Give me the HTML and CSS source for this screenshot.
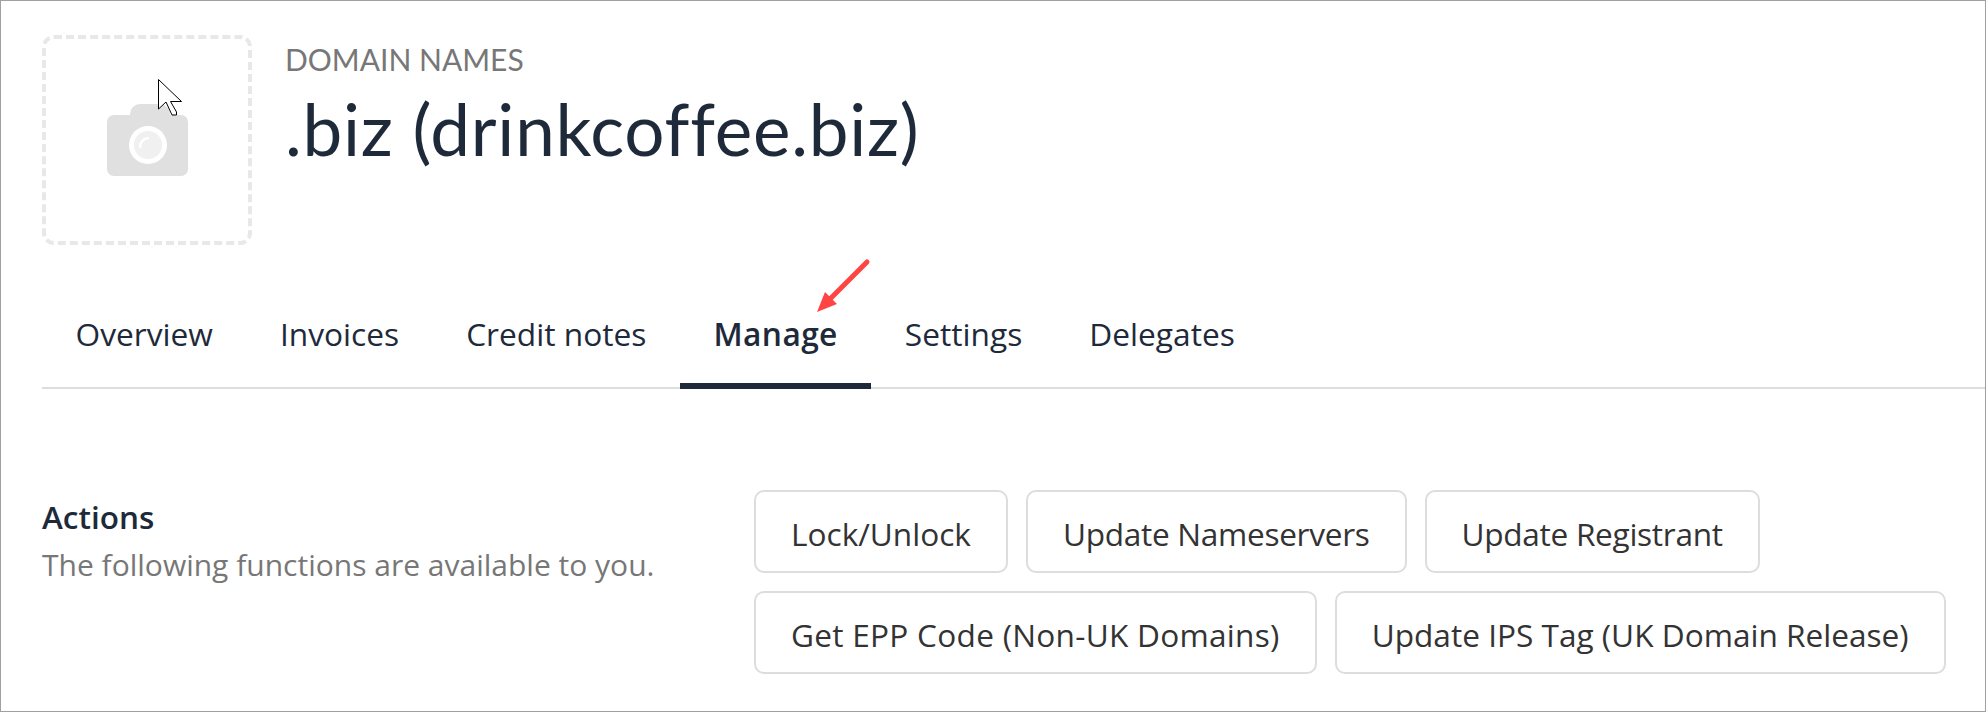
FILE: index.html
```html
<!DOCTYPE html>
<html lang="en">

<head>
    <meta charset="UTF-8" />
    <meta name="viewport" content="width=device-width, initial-scale=1.0" />
    <title>.biz (drinkcoffee.biz)</title>
    <link rel="stylesheet" href="styles.css">
</head>

<body>
    <div class="frame">
        <header class="header">
            <div class="logo-box">
                <svg class="camera" width="82" height="72" viewBox="0 0 82 72">
                    <path fill="#e0e0e0" d="M7 11h16v-1a10 10 0 0 1 10-10h20a10 10 0 0 1 10 10v1h11a7 7 0 0 1 7 7v47a7 7 0 0 1-7 7H7a7 7 0 0 1-7-7V18a7 7 0 0 1 7-7z" />
                    <circle cx="41" cy="41" r="19" fill="#fff" />
                    <circle cx="41" cy="41" r="14" fill="#f0f0f0" />
                    <path fill="none" stroke="#fff" stroke-width="2.5" stroke-linecap="round" d="M33 43a9 9 0 0 1 8-9" />
                </svg>
            </div>
            <div class="title-block">
                <div class="eyebrow">DOMAIN NAMES</div>
                <h1>.biz (drinkcoffee.biz)</h1>
            </div>
        </header>

        <nav class="tabs">
            <a class="tab">Overview</a>
            <a class="tab">Invoices</a>
            <a class="tab">Credit notes</a>
            <a class="tab active">Manage</a>
            <a class="tab">Settings</a>
            <a class="tab">Delegates</a>
        </nav>

        <section class="actions">
            <div class="actions-info">
                <h2>Actions</h2>
                <p>The following functions are available to you.</p>
            </div>
            <div class="actions-buttons">
                <button type="button">Lock/Unlock</button>
                <button type="button" class="tight">Update Nameservers</button>
                <button type="button" class="tight">Update Registrant</button>
                <button type="button" class="loose">Get EPP Code (Non-UK Domains)</button>
                <button type="button">Update IPS Tag (UK Domain Release)</button>
            </div>
        </section>

        <svg class="pointer" width="26" height="40" viewBox="0 0 26 40">
            <path fill="#fff" stroke="#000" stroke-width="1" d="M.5.5v29.5l7.5-7 6 13h4.500v-3l-6-10.500h11z" />
        </svg>
        <svg class="red-arrow" width="60" height="60" viewBox="0 0 60 60">
            <path fill="none" stroke="#ff4444" stroke-width="5" stroke-linecap="round" d="M53 7L11 49" />
            <path fill="#ff4444" d="M3 57l8-20 12 12z" />
        </svg>
    </div>
</body>

</html>
```

FILE: styles.css
```css
* {
    box-sizing: border-box;
}

body {
    margin: 0;
    font-family: "Open Sans", sans-serif;
    background: #fff;
    color: #1e2a3a;
}

.frame {
    position: relative;
    height: 712px;
    padding: 34px 0 0 41px;
    border: 1px solid #a0a0a0;
    overflow: hidden;
}

.header {
    display: flex;
}

.logo-box {
    display: flex;
    align-items: center;
    justify-content: center;
    width: 210px;
    height: 210px;
    padding-left: 2px;
    border: 4px dashed #e8e8e8;
    border-radius: 12px;
}

.title-block {
    margin-left: 33px;
}

.eyebrow {
    margin-top: 6px;
    font-family: "Lato", sans-serif;
    font-size: 30px;
    line-height: 36px;
    color: #777;
}

h1 {
    margin: 10px 0 0;
    font-family: "Lato", sans-serif;
    font-size: 71px;
    font-weight: 400;
    letter-spacing: 0.75px;
    line-height: 84px;
    color: #1e2a3a;
}

.tabs {
    display: flex;
    margin-top: 61px;
    height: 83px;
    border-bottom: 2px solid #ddd;
}

.tab {
    height: 83px;
    padding: 6px 33.5px 0;
    font-size: 31.7px;
    line-height: 44px;
    border-bottom: 6px solid transparent;
}

.tab.active {
    font-weight: 600;
    letter-spacing: 0.4px;
    border-bottom-color: #1e2a3a;
}

.actions {
    display: flex;
    margin-top: 101px;
}

.actions-info {
    width: 712px;
    padding-top: 7px;
}

h2 {
    margin: 0;
    font-size: 31.5px;
    font-weight: 600;
    line-height: 40px;
}

.actions-info p {
    margin: 8px 0 0;
    font-size: 30px;
    line-height: 40px;
    color: #777;
}

.actions-buttons {
    display: flex;
    flex-wrap: wrap;
    gap: 18px;
    width: 1220px;
}

button {
    height: 83px;
    padding: 3px 35px 0;
    font-family: inherit;
    font-size: 31.6px;
    color: #333;
    background: #fff;
    border: 2px solid #ddd;
    border-radius: 10px;
}

button.tight {
    letter-spacing: -0.3px;
}

button.loose {
    letter-spacing: 0.27px;
}

.pointer {
    position: absolute;
    left: 157px;
    top: 78px;
}

.red-arrow {
    position: absolute;
    left: 813px;
    top: 254px;
}
```
